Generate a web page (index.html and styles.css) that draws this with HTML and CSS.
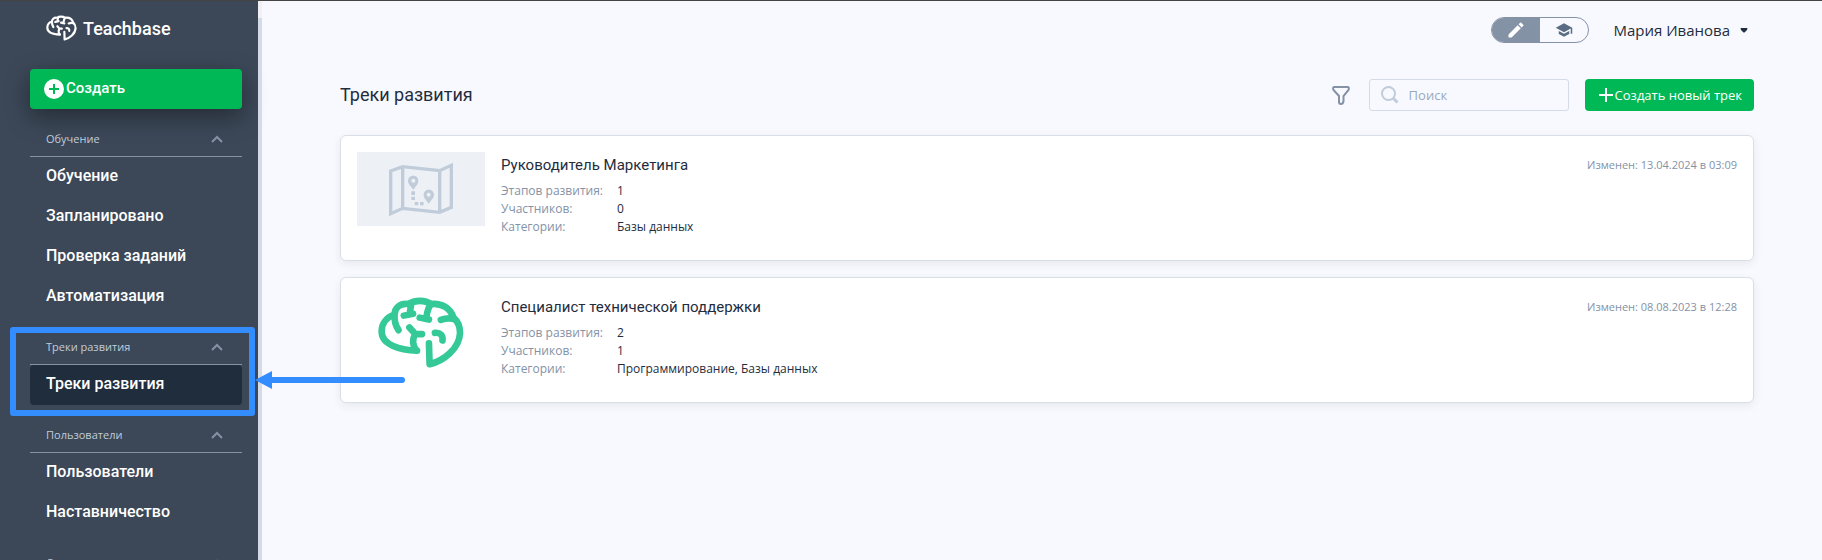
FILE: index.html
```html
<!DOCTYPE html>
<html lang="ru">
<head>
    <meta charset="UTF-8">
    <meta name="viewport" content="width=device-width, initial-scale=1.0">
    <title>Треки развития</title>
    <link rel="stylesheet" href="styles.css">
</head>
<body>
    <svg class="sprite" aria-hidden="true">
        <symbol id="brain" viewBox="22 52 260 214">
            <path d="M140 214C90 212 33 197 33 156C33 130 50 112 72 105C72 84 90 69 114 73C132 60 165 60 182 73C215 69 242 86 250 114C263 125 270 140 270 160C268 208 220 245 178 255L176 192"/>
            <path d="M72 105C71 125 76 140 84 152M122 76L118 100M100 108L128 102M182 73C172 85 170 100 168 114M148 114L176 120M212 121C225 116 240 115 252 118M194 160C210 158 219 168 217 183M117 144L134 163L155 164M134 163C126 180 124 195 137 212"/>
        </symbol>
        <symbol id="chevron" viewBox="0 0 12 8">
            <path d="M1 7L6 2L11 7"/>
        </symbol>
    </svg>
    <div class="layout">
        <aside class="sidebar">
            <a href="#" class="logo">
                <svg class="logo-icon"><use href="#brain"/></svg>
                <span>Teachbase</span>
            </a>
            <button class="create">
                <svg width="20" height="20" viewBox="0 0 20 20">
                    <circle cx="10" cy="10" r="10" fill="#fff"/>
                    <path d="M10 5V15M5 10H15" stroke="#00b956" stroke-width="2"/>
                </svg>
                <span>Создать</span>
            </button>
            <nav>
                <div class="group">
                    <button class="group-title">Обучение <svg class="chevron"><use href="#chevron"/></svg></button>
                    <a href="#" class="item">Обучение</a>
                    <a href="#" class="item">Запланировано</a>
                    <a href="#" class="item">Проверка заданий</a>
                    <a href="#" class="item">Автоматизация</a>
                </div>
                <div class="group">
                    <button class="group-title">Треки развития <svg class="chevron"><use href="#chevron"/></svg></button>
                    <a href="#" class="item active">Треки развития</a>
                    <div class="highlight">
                        <svg class="arrow" viewBox="0 0 150 18">
                            <path d="M0 9L17 0V6H147A3 3 0 0 1 147 12H17V18Z" fill="#338dff"/>
                        </svg>
                    </div>
                </div>
                <div class="group">
                    <button class="group-title">Пользователи <svg class="chevron"><use href="#chevron"/></svg></button>
                    <a href="#" class="item">Пользователи</a>
                    <a href="#" class="item">Наставничество</a>
                </div>
                <div class="group">
                    <button class="group-title">Система <svg class="chevron"><use href="#chevron"/></svg></button>
                </div>
            </nav>
        </aside>
        <div class="scrollbar"></div>
        <main>
            <header class="topbar">
                <div class="mode">
                    <button class="mode-btn selected" aria-label="Редактор">
                        <svg width="20" height="20" viewBox="0 0 24 24"><path d="M3 17.25V21h3.75L17.8 9.94l-3.75-3.75L3 17.25zM20.7 7.04a1 1 0 0 0 0-1.41l-2.34-2.34a1 1 0 0 0-1.41 0l-1.83 1.83 3.75 3.75 1.83-1.83z"/></svg>
                    </button>
                    <button class="mode-btn" aria-label="Обучение">
                        <svg width="18" height="18" viewBox="0 0 24 24"><path d="M5 13.2v4L12 21l7-3.800v-4L12 17l-7-3.800zM12 3L1 9l11 6 9-4.900V17h2V9L12 3z"/></svg>
                    </button>
                </div>
                <button class="user">
                    <span>Мария Иванова</span>
                    <svg width="8" height="5" viewBox="0 0 8 5"><path d="M1 0H7Q8 0 7 2L5 4Q4 5 3 4L1 2Q0 0 1 0Z" fill="#1f2d3d"/></svg>
                </button>
            </header>
            <div class="page-head">
                <h1>Треки развития</h1>
                <button class="filter" aria-label="Фильтр">
                    <svg width="18" height="19" viewBox="0 0 18 19"><path d="M2 1H16Q17.500 1.500 16.500 4L11.500 10V15Q11 18 9 18Q7 18 7 16V10L1.500 4Q.500 1.500 2 1Z"/></svg>
                </button>
                <div class="search">
                    <svg width="18" height="18" viewBox="0 0 18 18"><circle cx="7.500" cy="7.500" r="6.500"/><path d="M12 12L16.500 16.500" stroke-width="3"/></svg>
                    <input type="text" placeholder="Поиск" aria-label="Поиск">
                </div>
                <button class="new-track">
                    <svg width="14" height="14" viewBox="0 0 14 14"><path d="M7 0V14M0 7H14"/></svg>
                    <span>Создать новый трек</span>
                </button>
            </div>
            <div class="tracks">
                <article class="card">
                    <svg class="thumb map" viewBox="21 21 384 222">
                        <path class="line" d="M122 78L158 65L269 77L304 61V187L269 202L158 190L122 206ZM158 65V190M269 77V202"/>
                        <path class="pin" d="M190 134C180 120 174 116 174 107A15 15 0 0 1 205 107C205 116 200 120 190 134ZM190 101A6 6 0 1 0 190 113A6 6 0 1 0 190 101Z"/>
                        <path class="pin" d="M236 176C226 162 221 158 221 149A15 15 0 0 1 252 149C252 158 246 162 236 176ZM236 143A6 6 0 1 0 236 155A6 6 0 1 0 236 143Z"/>
                        <path class="pin" d="M184 139h11v11h-11zM184 155h11v10h-11zM194 171h11v10h-11zM210 171h11v10h-11z"/>
                    </svg>
                    <div class="info">
                        <h2>Руководитель Маркетинга</h2>
                        <dl>
                            <dt>Этапов развития:</dt><dd>1</dd>
                            <dt>Участников:</dt><dd>0</dd>
                            <dt>Категории:</dt><dd>Базы данных</dd>
                        </dl>
                    </div>
                    <div class="date">Изменен: 13.04.2024 в 03:09</div>
                </article>
                <article class="card">
                    <div class="thumb">
                        <svg class="brain"><use href="#brain"/></svg>
                    </div>
                    <div class="info">
                        <h2>Специалист технической поддержки</h2>
                        <dl>
                            <dt>Этапов развития:</dt><dd>2</dd>
                            <dt>Участников:</dt><dd>1</dd>
                            <dt>Категории:</dt><dd>Программирование, Базы данных</dd>
                        </dl>
                    </div>
                    <div class="date">Изменен: 08.08.2023 в 12:28</div>
                </article>
            </div>
        </main>
    </div>
</body>
</html>
```
FILE: styles.css
```css
* {
    box-sizing: border-box;
}
body {
    margin: 0;
    font-family: "Open Sans", "Noto Sans", sans-serif;
    font-size: 12px;
    color: #1f2d3d;
    background: #f8f9fe;
}
button {
    padding: 0;
    border: none;
    background: none;
    font-family: inherit;
    color: inherit;
    cursor: pointer;
}
a {
    color: inherit;
    text-decoration: none;
}
.sprite {
    position: absolute;
    width: 0;
    height: 0;
}
.layout {
    display: flex;
    height: 100vh;
    overflow: hidden;
    border-top: 1px solid #444;
}

/* Sidebar */
.sidebar {
    flex: none;
    width: 258px;
    padding: 13px 16px 0 30px;
    background: #3c4858;
    color: #fff;
}
.logo {
    display: flex;
    align-items: center;
    gap: 6px;
    height: 28px;
    margin-bottom: 27px;
    padding-left: 16px;
    font-family: Roboto, sans-serif;
    font-size: 18px;
    font-weight: 500;
}
.logo-icon {
    width: 31px;
    height: 26px;
    fill: none;
    stroke: #fff;
    stroke-width: 18;
    stroke-linecap: round;
    stroke-linejoin: round;
}
.create {
    display: flex;
    align-items: center;
    gap: 2px;
    width: 100%;
    height: 40px;
    padding-left: 14px;
    border-radius: 4px;
    background: #00b956;
    box-shadow: 0 8px 24px rgba(0, 0, 0, 0.4);
    font-family: Roboto, sans-serif;
    font-size: 15px;
    font-weight: 500;
}
.create span {
    padding-bottom: 2px;
}
.group {
    position: relative;
}
.group-title {
    display: flex;
    align-items: center;
    justify-content: space-between;
    width: 100%;
    height: 48px;
    padding: 12px 18px 0 16px;
    border-bottom: 1px solid #8492a6;
    font-size: 11px;
    color: #c0ccda;
}
.chevron {
    width: 14px;
    height: 8px;
    fill: none;
    stroke: #8492a6;
    stroke-width: 2;
}
.item {
    display: block;
    height: 40px;
    padding-left: 16px;
    border-radius: 4px;
    font-family: Roboto, sans-serif;
    font-size: 16px;
    font-weight: 500;
    line-height: 38px;
}
.item.active {
    background: #1f2d3d;
}
.highlight {
    position: absolute;
    z-index: 1;
    top: 10px;
    right: -13px;
    bottom: -11px;
    left: -20px;
    border: 6px solid #338dff;
    border-radius: 3px;
    pointer-events: none;
}
.arrow {
    position: absolute;
    top: 38px;
    left: 239px;
    width: 150px;
    height: 18px;
}
.scrollbar {
    flex: none;
    width: 4px;
    border-top: 17px solid #f1f1f5;
    background: #d3dce6;
}

/* Content */
main {
    flex: 1;
    padding: 16px 68px 0 78px;
}
.topbar {
    display: flex;
    justify-content: flex-end;
    align-items: center;
    gap: 24px;
    height: 26px;
    padding-right: 6px;
}
.mode {
    display: flex;
    width: 98px;
    height: 26px;
    border: 1px solid #8492a6;
    border-radius: 13px;
    overflow: hidden;
}
.mode-btn {
    display: flex;
    flex: 1;
    align-items: center;
    justify-content: center;
    fill: #5a6d84;
}
.mode-btn.selected {
    background: #8492a6;
    fill: #fff;
}
.user {
    display: flex;
    align-items: center;
    gap: 10px;
    font-size: 15px;
}
.page-head {
    display: flex;
    align-items: center;
    height: 32px;
    margin: 36px 0 24px;
}
h1 {
    flex: 1;
    margin: 0;
    padding-bottom: 2px;
    font-family: Roboto, sans-serif;
    font-size: 18px;
    font-weight: 400;
}
.filter {
    display: flex;
    margin-right: 19px;
}
.filter svg {
    fill: none;
    stroke: #8492a6;
    stroke-width: 2;
}
.search {
    display: flex;
    align-items: center;
    gap: 10px;
    width: 200px;
    height: 32px;
    margin-right: 16px;
    padding: 0 11px;
    border: 1px solid #d3dce6;
    border-radius: 3px;
}
.search svg {
    flex: none;
    fill: none;
    stroke: #c0ccda;
    stroke-width: 2;
}
.search input {
    width: 100%;
    padding: 0;
    border: none;
    outline: none;
    background: none;
    font-family: inherit;
    font-size: 13px;
}
.search input::placeholder {
    color: #99a9bf;
}
.new-track {
    display: flex;
    align-items: center;
    gap: 2px;
    height: 32px;
    padding: 0 12px 0 14px;
    border-radius: 4px;
    background: #00b956;
    font-size: 13px;
    color: #fff;
}
.new-track svg {
    stroke: #fff;
    stroke-width: 2;
}
.tracks {
    display: flex;
    flex-direction: column;
    gap: 16px;
}
.card {
    display: flex;
    gap: 16px;
    height: 126px;
    padding: 16px;
    border: 1px solid #d8dfe8;
    border-radius: 6px;
    background: #fff;
    box-shadow: 0 3px 8px rgba(31, 45, 61, 0.08);
}
.thumb {
    flex: none;
    display: flex;
    align-items: flex-end;
    justify-content: center;
    width: 128px;
    height: 74px;
}
.map {
    background: #edf1f6;
}
.map .line {
    fill: none;
    stroke: #c0ccda;
    stroke-width: 10;
}
.map .pin {
    fill: #c0ccda;
    fill-rule: evenodd;
}
.brain {
    width: 86px;
    height: 71px;
    fill: none;
    stroke: #34c997;
    stroke-width: 20;
    stroke-linecap: round;
    stroke-linejoin: round;
}
.info {
    flex: 1;
}
h2 {
    margin: 0 0 4px;
    font-family: Roboto, sans-serif;
    font-size: 15px;
    font-weight: 400;
    line-height: 26px;
}
dl {
    display: grid;
    grid-template-columns: 116px 1fr;
    margin: 0;
    line-height: 18px;
}
dt {
    color: #8492a6;
}
dd {
    margin: 0;
}
.date {
    font-size: 11px;
    line-height: 26px;
    color: #8492a6;
}
```
